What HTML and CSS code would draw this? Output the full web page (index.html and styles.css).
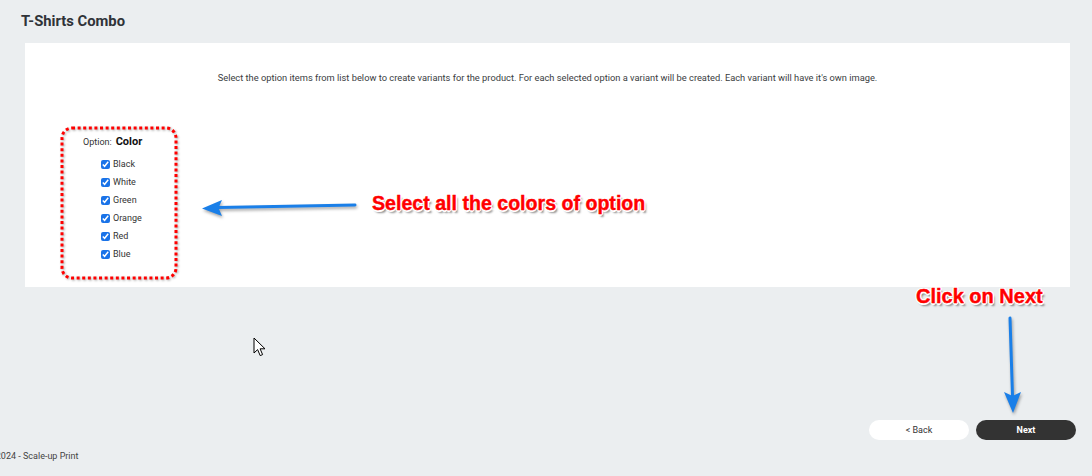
FILE: index.html
```html
<!DOCTYPE html>
<html lang="en">
<head>
<meta charset="utf-8">
<title>T-Shirts Combo</title>
<link rel="stylesheet" href="styles.css">
</head>
<body>
<div class="page">
  <h1 class="title">T-Shirts Combo</h1>
  <section class="card">
    <p class="intro">Select the option items from list below to create variants for the product. For each selected option a variant will be created. Each variant will have it's own image.</p>
    <div class="option-row">
      <div class="option-box">
        <svg class="dots" width="118" height="154" viewBox="0 0 118 154"><rect x="2" y="2" width="114" height="150" rx="10" ry="10" fill="none" stroke="#f00" stroke-width="3" stroke-dasharray="3 2.6"/></svg>
        <div class="option-head"><span class="option-lbl">Option:</span> <span class="option-name">Color</span></div>
        <ul class="items">
          <li><input type="checkbox" checked><span>Black</span></li>
          <li><input type="checkbox" checked><span>White</span></li>
          <li><input type="checkbox" checked><span>Green</span></li>
          <li><input type="checkbox" checked><span>Orange</span></li>
          <li><input type="checkbox" checked><span>Red</span></li>
          <li><input type="checkbox" checked><span>Blue</span></li>
        </ul>
      </div>
      <svg class="arrow-left" width="158" height="24" viewBox="0 0 158 24"><line x1="18" y1="11.5" x2="155" y2="9" stroke="#1a7fe8" stroke-width="3" stroke-linecap="round"/><path d="M2 12.5 L22 4 L18.5 12 L22 20 Z" fill="#1a7fe8"/></svg>
      <div class="note">Select all the colors of option</div>
    </div>
  </section>
  <div class="actions">
    <button class="btn btn-back">&lt; Back</button>
    <button class="btn btn-next">Next</button>
  </div>
  <footer class="footer"><span class="copy">© 2024 - Scale-up Print</span></footer>

  <div class="note note-next">Click on Next</div>
  <svg class="arrow-down" width="26" height="100" viewBox="0 0 26 100"><line x1="10" y1="2" x2="12.5" y2="80" stroke="#1a7fe8" stroke-width="3" stroke-linecap="round"/><path d="M13 97 L4 76 L12.5 80 L21 76 Z" fill="#1a7fe8"/></svg>
  <svg class="cursor" width="14" height="20" viewBox="0 0 14 20"><path d="M1 1 L1 16 L4.6 12.6 L7.2 18.6 L9.6 17.6 L7.1 11.8 L12 11.8 Z" fill="#fff" stroke="#000" stroke-width="1" stroke-linejoin="round"/></svg>
</div>
</body>
</html>
```
FILE: styles.css
```css
* { box-sizing: border-box; }
html, body { margin: 0; padding: 0; }
body {
  background: #ebeef0;
  font-family: Roboto, "Liberation Sans", Arial, sans-serif;
  color: #333;
  width: 1092px;
  height: 476px;
  overflow: hidden;
}
.page { position: relative; width: 1092px; height: 476px; overflow: hidden; }
.title {
  margin: 0;
  padding: 12px 21px 0;
  height: 43px;
  font-size: 14.8px;
  font-weight: 700;
  line-height: 18px;
  color: #2f3338;
}
.card {
  background: #fff;
  margin: 0 22px 0 25px;
  height: 244px;
  padding-top: 29px;
}
.intro {
  margin: 0;
  text-align: center;
  font-size: 9.3px;
  line-height: 11px;
  color: #3a3d41;
}
.option-row {
  display: flex;
  align-items: center;
  margin: 43px 0 0 35px;
}
.option-box {
  position: relative;
  width: 118px;
  height: 154px;
  padding: 7px 0 0 23px;
  flex: none;
}
.dots {
  position: absolute;
  left: 0;
  top: 0;
  filter: drop-shadow(1px 1px 1.2px rgba(0,0,0,0.35));
}
.option-head { line-height: 14px; white-space: nowrap; }
.option-lbl { font-size: 9px; color: #333; }
.option-name { font-size: 11px; font-weight: 700; color: #111; }
.items {
  list-style: none;
  margin: 6px 0 0;
  padding: 0 0 0 18px;
}
.items li {
  display: flex;
  align-items: center;
  height: 18px;
  gap: 3px;
  font-size: 9px;
  color: #333;
}
.items input {
  width: 9px;
  height: 9px;
  margin: 0;
  accent-color: #1a73e8;
}
.arrow-left {
  flex: none;
  margin: 9px 0 0 22px;
  filter: drop-shadow(1px 2px 1.5px rgba(0,0,0,0.35));
}
.note {
  font-family: "Liberation Sans", Arial, sans-serif;
  font-weight: 700;
  font-size: 19.6px;
  line-height: 22px;
  color: #f00;
  -webkit-text-stroke: 0.4px #f00;
  white-space: nowrap;
  text-shadow:
    1.5px 0 0 #fff, -1.5px 0 0 #fff, 0 1.5px 0 #fff, 0 -1.5px 0 #fff,
    1px 1px 0 #fff, -1px -1px 0 #fff, 1px -1px 0 #fff, -1px 1px 0 #fff,
    2px 2.5px 2px rgba(0,0,0,0.45);
}
.option-row .note { margin: 0 0 0 14px; }
.note-next {
  position: absolute;
  left: 916px;
  top: 285px;
  font-size: 20px;
}
.arrow-down {
  position: absolute;
  left: 1000px;
  top: 316px;
  filter: drop-shadow(1px 2px 1.5px rgba(0,0,0,0.35));
}
.cursor {
  position: absolute;
  left: 253px;
  top: 337px;
}
.actions {
  display: flex;
  justify-content: flex-end;
  gap: 7px;
  margin-top: 133px;
  padding-right: 16px;
}
.btn {
  width: 100px;
  height: 20px;
  border: none;
  border-radius: 10px;
  font-family: Roboto, "Liberation Sans", Arial, sans-serif;
  font-size: 9px;
  padding: 0;
  line-height: 20px;
}
.btn-back { background: #fff; color: #333; }
.btn-next { background: #333; color: #fff; font-weight: 700; }
.footer {
  margin-top: 10px;
  height: 12px;
  font-size: 9px;
  line-height: 12px;
  color: #444;
  white-space: nowrap;
}
.copy { margin-left: -13.5px; }
```
